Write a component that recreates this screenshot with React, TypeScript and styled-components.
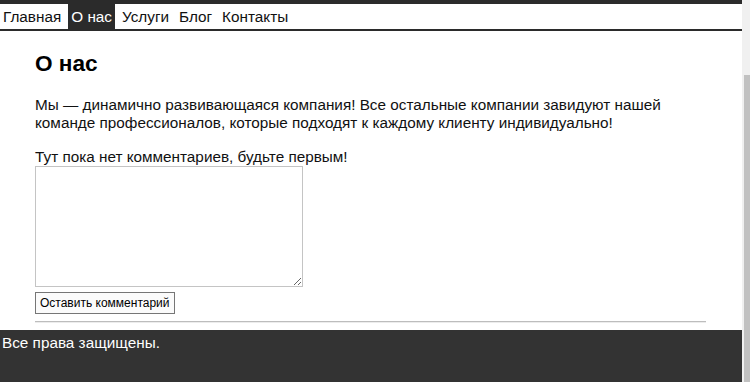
import React from "react"
import styled, { createGlobalStyle } from "styled-components"

const links = ["Главная", "О нас", "Услуги", "Блог", "Контакты"]

export default function App() {
    return <Shell>
        <GlobalStyle />
        <Page>
            <Nav>
                {links.map(l => <NavLink key={l} href="#" $active={l === "О нас"}>{l}</NavLink>)}
            </Nav>
            <Main>
                <Title>О нас</Title>
                <Text>
                    Мы — динамично развивающаяся компания! Все остальные компании завидуют нашей
                    команде профессионалов, которые подходят к каждому клиенту индивидуально!
                </Text>
                <Label>Тут пока нет комментариев, будьте первым!</Label>
                <Comment />
                <Button>Оставить комментарий</Button>
                <Rule />
            </Main>
            <Footer>Все права защищены.</Footer>
        </Page>
        <ScrollTrack>
            <ScrollThumb />
        </ScrollTrack>
    </Shell>
}

const GlobalStyle = createGlobalStyle`
  html, body {
    margin: 0;
    overflow: hidden;
    background: #fff;
    font-family: "Liberation Sans", Arial, sans-serif;
    color: #111;
  }
`
const Shell = styled.div`
  display: flex;
  height: 382px;
`
const Page = styled.div`
  flex: 1;
  display: flex;
  flex-direction: column;
`
const Nav = styled.nav`
  display: flex;
  gap: 4px;
  border-top: 4px solid #2b2b2b;
  border-bottom: 2px solid #2b2b2b;
  height: 25px;
  align-items: stretch;
`
const NavLink = styled.a<{ $active?: boolean }>`
  display: flex;
  align-items: center;
  padding: 0 3px;
  margin-top: ${p => p.$active ? "-4px" : "0"};
  padding-top: ${p => p.$active ? "4px" : "0"};
  font-size: 15.3px;
  text-decoration: none;
  color: ${p => p.$active ? "#fff" : "#111"};
  background: ${p => p.$active ? "#2b2b2b" : "transparent"};
`
const Main = styled.main`
  display: flex;
  flex-direction: column;
  align-items: flex-start;
  padding: 0 36px 0 35px;
`
const Title = styled.h1`
  margin: 19px 0 0;
  font-size: 22.6px;
  line-height: 28px;
  font-weight: bold;
  color: #000;
`
const Text = styled.p`
  margin: 18px 0 0;
  font-size: 15.3px;
  line-height: 18px;
`
const Label = styled(Text)`
  margin-top: 16px;
`
const Comment = styled.textarea`
  box-sizing: border-box;
  width: 268px;
  height: 121px;
  margin: 0;
  border: 1px solid #c4c4c4;
  resize: both;
`
const Button = styled.button`
  box-sizing: border-box;
  margin-top: 5px;
  height: 22px;
  padding: 1px 4px;
  font-family: "Liberation Sans", Arial, sans-serif;
  font-size: 12px;
  color: #000;
  background: #fbfbfb;
  border: 1px solid #767676;
  border-radius: 0;
`
const Rule = styled.hr`
  align-self: stretch;
  margin: 7px 0 0;
  border: none;
  border-top: 1px solid #bdbdbd;
  border-bottom: 1px solid #ececec;
`
const Footer = styled.footer`
  flex: 1;
  margin-top: 7px;
  padding: 4px 2px;
  background: #333;
  color: #fff;
  font-size: 15.3px;
  line-height: 18px;
`
const ScrollTrack = styled.div`
  width: 8px;
  display: flex;
  flex-direction: column;
  padding-top: 75px;
  background: #f0f0f0;
`
const ScrollThumb = styled.div`
  flex: 1;
  margin-left: 2px;
  background: #c1c1c1;
`
